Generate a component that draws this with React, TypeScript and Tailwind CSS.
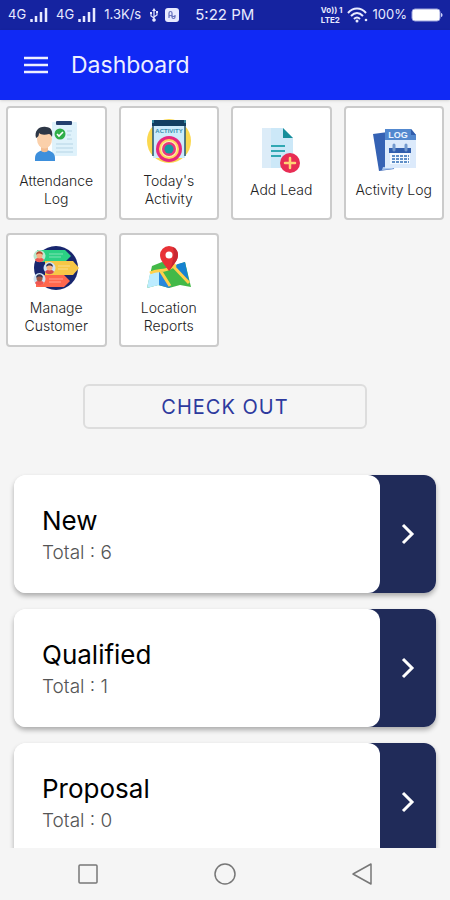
import type { ReactNode } from "react";

interface TileProps {
	title: string;
	icon: ReactNode;
}

interface StageProps {
	title: string;
	total: number;
}

const AttendanceIcon = () => (
	<svg viewBox="0 0 46 46" className="size-[46px]" aria-hidden="true">
		<rect x="19" y="4" width="25" height="34" rx="1" fill="#dff2fb" />
		<rect x="23" y="3" width="16" height="4" rx="1" fill="#243f6e" />
		<path
			d="M34 13h5M34 17h4M34 21h5M23 26h17M23 30h17M23 34h17"
			stroke="#b5d3e6"
			strokeWidth="1.2"
		/>
		<path
			d="M2 43v-3c0-5 4-7 8-8h4c4 1 8 3 8 8v3z"
			fill="#3d8fdc"
		/>
		<path d="M8 28h7v4c0 3-7 3-7 0z" fill="#f3bd91" />
		<ellipse cx="11.500" cy="21" rx="7.500" ry="9.500" fill="#fbd0aa" />
		<path
			d="M3 20c-2-7 3-12 10-11 5 0 7 4 6 10-1-2-2-3-3-3-4 1-8 1-10-1 0 3-1 4-3 5z"
			fill="#2d3746"
		/>
		<circle cx="27" cy="16" r="5.500" fill="#2fae49" />
		<path
			d="m24 16 2 2 4-4"
			fill="none"
			stroke="#fff"
			strokeWidth="1.600"
		/>
	</svg>
);

const TodayIcon = () => (
	<svg viewBox="0 0 46 46" className="size-[46px]" aria-hidden="true">
		<circle cx="23" cy="23" r="22" fill="#fbd84f" />
		<path d="M7 3h32v37H7z" fill="#cdecfb" />
		<path d="M7 8v30M39 8v30" stroke="#245674" strokeWidth="1.500" />
		<path d="M6 2h34v6H6z" fill="#123f61" />
		<path d="M7 2v3M39 2v3" stroke="#3689a1" strokeWidth="2" />
		<text
			x="23"
			y="15"
			textAnchor="middle"
			fontFamily="Liberation Sans, sans-serif"
			fontSize="6"
			fontWeight="700"
			fill="#398ead"
		>
			ACTIVITY
		</text>
		<circle cx="23" cy="31" r="13" fill="#e6277e" />
		<circle cx="23" cy="31" r="10" fill="#ffd75b" />
		<circle cx="23" cy="31" r="8" fill="#fff0bd" />
		<circle cx="23" cy="31" r="7" fill="#e9377c" />
		<circle cx="23" cy="31" r="4.500" fill="#149aa1" />
	</svg>
);

const AddLeadIcon = () => (
	<svg viewBox="0 0 46 46" className="size-[46px]" aria-hidden="true">
		<path d="M4 1h21l10 10v30H4z" fill="#cce8f8" />
		<path d="M4 1h9v40H4z" fill="#dcecf8" />
		<path d="M25 1v10h10z" fill="#168e9a" />
		<path
			d="M13 19h14M13 24h14M13 29h10"
			stroke="#31a8b3"
			strokeWidth="2"
		/>
		<circle cx="32" cy="36" r="10" fill="#e82d54" />
		<path
			d="M32 31v10M27 36h10"
			stroke="#ffd375"
			strokeWidth="2.500"
			strokeLinecap="round"
		/>
	</svg>
);

const ActivityLogIcon = () => (
	<svg viewBox="0 0 46 46" className="size-[46px]" aria-hidden="true">
		<path d="m2 7 15-2 6 37-15 2z" fill="#3562b4" />
		<path d="m11 43 10-1 8-3-17 1z" fill="#a9c7ef" />
		<path d="M14 2h26l5 6v33H14z" fill="#dceafb" />
		<path d="M14 2h26l5 6v5H14z" fill="#5288cf" />
		<path d="M40 2v6h5z" fill="#315dac" />
		<text
			x="27"
			y="11"
			textAnchor="middle"
			fontFamily="Liberation Sans, sans-serif"
			fontSize="9"
			fontWeight="700"
			fill="#e9f3ff"
		>
			LOG
		</text>
		<path d="M18 21h22v5H18z" fill="#315fae" />
		<path
			d="M23 18v5M35 18v5"
			stroke="#7299ce"
			strokeWidth="3"
			strokeLinecap="round"
		/>
		<path d="M19 26h20v11H19z" fill="#f5faff" />
		<path
			d="M21 29h17M21 32h17M21 35h17"
			stroke="#608fc7"
			strokeWidth="2"
			strokeDasharray="3 1"
		/>
	</svg>
);

const CustomerIcon = () => (
	<svg viewBox="0 0 46 46" className="size-[46px]" aria-hidden="true">
		<circle cx="23" cy="23" r="22" fill="#18266e" />
		<path d="M4 5h28l6 6-6 6H4z" fill="#2bd184" />
		<path d="M12 16h28l6 7-6 7H12z" fill="#f7c747" />
		<path d="M3 30h28l6 6-6 6H3z" fill="#ff674d" />
		<path
			d="M16 9h14M16 12h12M25 21h12M25 24h10M16 34h14M16 37h12"
			stroke="#fff"
			strokeOpacity=".4"
		/>
		<circle cx="6.500" cy="11" r="6" fill="#b9e9cf" />
		<circle cx="16.500" cy="23" r="6" fill="#cfe3f5" />
		<circle cx="6.500" cy="34" r="6" fill="#cfe3f5" />
		<path
			d="M2 15c1-3 8-3 9 0-2 3-7 3-9 0M2 38c1-3 8-3 9 0-2 3-7 3-9 0"
			fill="#ef5652"
		/>
		<path d="M12 27c1-3 8-3 9 0-2 3-7 3-9 0" fill="#d5484e" />
		<circle cx="6.500" cy="10.500" r="3" fill="#f6b183" />
		<circle cx="16.500" cy="22.500" r="3" fill="#f6b183" />
		<circle cx="6.500" cy="33.500" r="3" fill="#9b5746" />
		<path
			d="M3 10c0-5 7-5 7 0-2-2-5-2-7 0"
			fill="#ba4b31"
		/>
		<path
			d="M13 22c0-5 7-5 7 0-2-2-5-2-7 0M3 33c0-5 7-5 7 0-2-2-5-2-7 0"
			fill="#343653"
		/>
	</svg>
);

const LocationIcon = () => (
	<svg viewBox="0 0 46 46" className="size-[46px]" aria-hidden="true">
		<path
			d="m6 21 10-4 14 3 9-3 6 25-11-2-11 3-11-3-11 3z"
			fill="#43b948"
		/>
		<path d="m4 28 9-2v14L1 43z" fill="#bcecff" />
		<path d="m13 26 12 15-2 2-10-3z" fill="#2887dc" />
		<path d="m28 21 4-2 7-2 4 19z" fill="#1682d0" />
		<path
			d="M4 28c8-4 14-1 20-5l6-3M14 25l10 16M27 21l16 17"
			fill="none"
			stroke="#ffd04c"
			strokeWidth="3"
		/>
		<path
			d="M23 26C18 19 14 15 14 10a9 9 0 0 1 18 0c0 5-4 9-9 16"
			fill="#e83236"
		/>
		<path
			d="M23 26c5-7 9-11 9-16 0-4-2-7-5-8 2 9-1 18-4 24"
			fill="#c92631"
		/>
		<circle cx="23" cy="10" r="3.500" fill="#fff" />
	</svg>
);

const tiles: TileProps[] = [
	{ title: "Attendance Log", icon: <AttendanceIcon /> },
	{ title: "Today's Activity", icon: <TodayIcon /> },
	{ title: "Add Lead", icon: <AddLeadIcon /> },
	{ title: "Activity Log", icon: <ActivityLogIcon /> },
	{ title: "Manage Customer", icon: <CustomerIcon /> },
	{ title: "Location Reports", icon: <LocationIcon /> },
];

const stages: StageProps[] = [
	{ title: "New", total: 6 },
	{ title: "Qualified", total: 1 },
	{ title: "Proposal", total: 0 },
];

const Signal = () => (
	<svg viewBox="0 0 18 14" className="h-3.5 w-[18px]" aria-hidden="true">
		<path
			d="M1.500 11v3M6 8v6M11 4v10M16 0v14"
			stroke="currentColor"
			strokeWidth="2.500"
		/>
	</svg>
);

const StatusBar = () => (
	<div className="flex h-[30px] shrink-0 items-center bg-[#1523a0] pr-[7px] pl-2 text-[13px] text-[#e8eaff]">
		<div className="flex items-center gap-1">
			<span>4G</span>
			<Signal />
			<span className="ml-1">4G</span>
			<Signal />
			<span className="ml-1">1.3K/s</span>
			<svg
				viewBox="0 0 10 14"
				className="ml-1 h-3.5 w-2.5"
				fill="none"
				stroke="currentColor"
				strokeWidth="1.200"
				aria-hidden="true"
			>
				<path d="M5 12V2M5 10 2 8V5M5 9l3-2V4" />
				<path d="m3 3 2-3 2 3z" fill="currentColor" stroke="none" />
				<circle cx="5" cy="12" r="1.200" fill="currentColor" />
				<path d="M1 4h2v2H1zM7 3h2v2H7z" fill="currentColor" stroke="none" />
			</svg>
			<svg viewBox="0 0 14 14" className="ml-0.5 size-3.5" aria-hidden="true">
				<rect width="14" height="14" rx="3" fill="#e8eaff" />
				<path
					d="M4 10V5c0-2 3-2 3 0v4c0 2 3 2 3 0V7M4 8c2-2 4 2 6 0"
					fill="none"
					stroke="#6670bd"
					strokeWidth="1.200"
				/>
			</svg>
		</div>
		<span className="ml-4 text-[15px]">5:22 PM</span>
		<div className="ml-auto flex items-center gap-1">
			<span className="flex flex-col text-[8px] leading-[10px] font-bold">
				<span>Vo)) 1</span>
				<span>LTE2</span>
			</span>
			<svg
				viewBox="0 0 22 16"
				className="h-4 w-[22px]"
				fill="none"
				stroke="currentColor"
				strokeWidth="2"
				aria-hidden="true"
			>
				<path d="M1 6c5-6 13-6 18 0M4 9c4-4 8-4 12 0M7 12c2-2 4-2 6 0" />
				<circle cx="10" cy="14" r="1.500" fill="currentColor" stroke="none" />
				<circle cx="19" cy="13" r="1.300" fill="currentColor" stroke="none" />
			</svg>
			<span>100%</span>
			<svg viewBox="0 0 32 14" className="h-3.5 w-8" aria-hidden="true">
				<rect
					x="1"
					y="1"
					width="28"
					height="12"
					rx="3"
					fill="#fff"
					stroke="#9ca3dc"
				/>
				<path d="M30 5c2 0 2 4 0 4z" fill="#cfd3ff" />
			</svg>
		</div>
	</div>
);

const Header = () => (
	<header className="flex h-[70px] shrink-0 items-center gap-[22px] bg-[#1029f5] px-[23px] text-[#eef0ff] shadow-sm">
		<button type="button" aria-label="Open menu">
			<svg
				viewBox="0 0 26 18"
				className="h-[18px] w-[26px]"
				stroke="currentColor"
				strokeWidth="2.500"
				aria-hidden="true"
			>
				<path d="M1 2h24M1 9h24M1 16h24" />
			</svg>
		</button>
		<h1 className="text-[23px]">Dashboard</h1>
	</header>
);

const Tile = ({ title, icon }: TileProps) => (
	<button
		type="button"
		className="flex h-[114px] flex-col items-center justify-center gap-2 rounded border-2 border-[#cbcbcb] bg-white px-2 text-sm leading-[18px] font-light text-[#222222]"
	>
		{icon}
		<span>{title}</span>
	</button>
);

const StageCard = ({ title, total }: StageProps) => (
	<button
		type="button"
		className="flex h-[118px] w-full items-stretch rounded-xl bg-white text-left shadow-[0_3px_5px_rgba(0,0,0,0.3)]"
	>
		<span className="z-10 flex flex-1 flex-col justify-center rounded-xl bg-white pt-1.5 pl-7">
			<span className="text-[26px] leading-8 text-black">{title}</span>
			<span className="text-[19px] leading-8 font-light text-[#555555]">
				Total : {total}
			</span>
		</span>
		<span className="-ml-3 flex w-[68px] items-center justify-center rounded-r-xl bg-[#202b59] pl-3 text-white">
			<svg
				viewBox="0 0 32 32"
				className="size-8"
				fill="none"
				stroke="currentColor"
				strokeWidth="3"
				aria-hidden="true"
			>
				<path d="m11 7 9 9-9 9" />
			</svg>
		</span>
	</button>
);

const NavBar = () => (
	<nav className="flex h-[52px] shrink-0 items-center justify-between bg-[#f5f5f5] px-[76px] text-[#777777]">
		<button type="button" aria-label="Recent apps">
			<svg
				viewBox="0 0 24 24"
				className="size-6"
				fill="none"
				stroke="currentColor"
				strokeWidth="1.500"
			>
				<rect x="3" y="3" width="18" height="18" rx="1" />
			</svg>
		</button>
		<button type="button" aria-label="Home">
			<svg
				viewBox="0 0 24 24"
				className="size-6"
				fill="none"
				stroke="currentColor"
				strokeWidth="1.500"
			>
				<circle cx="12" cy="12" r="10" />
			</svg>
		</button>
		<button type="button" aria-label="Back">
			<svg
				viewBox="0 0 24 24"
				className="size-6"
				fill="none"
				stroke="currentColor"
				strokeWidth="1.500"
				strokeLinejoin="round"
			>
				<path d="M21 2v20L3 12z" />
			</svg>
		</button>
	</nav>
);

export default function App() {
	return (
		<div className="flex h-screen flex-col bg-[#f5f5f5] font-['Inter',sans-serif]">
			<StatusBar />
			<Header />
			<main className="min-h-0 flex-1 overflow-y-auto pt-1.5 [scrollbar-width:none]">
				<div className="grid grid-cols-4 gap-x-3 gap-y-[13px] px-1.5">
					{tiles.map((tile) => (
						<Tile key={tile.title} {...tile} />
					))}
				</div>
				<div className="px-[83px] pt-[37px] pb-[46px]">
					<button
						type="button"
						className="h-[45px] w-full rounded-md border-2 border-[#dddddd] text-xl tracking-wider text-[#2d3a9e]"
					>
						CHECK OUT
					</button>
				</div>
				<div className="flex flex-col gap-4 px-[14px] pb-4">
					{stages.map((stage) => (
						<StageCard key={stage.title} {...stage} />
					))}
				</div>
			</main>
			<NavBar />
		</div>
	);
}
